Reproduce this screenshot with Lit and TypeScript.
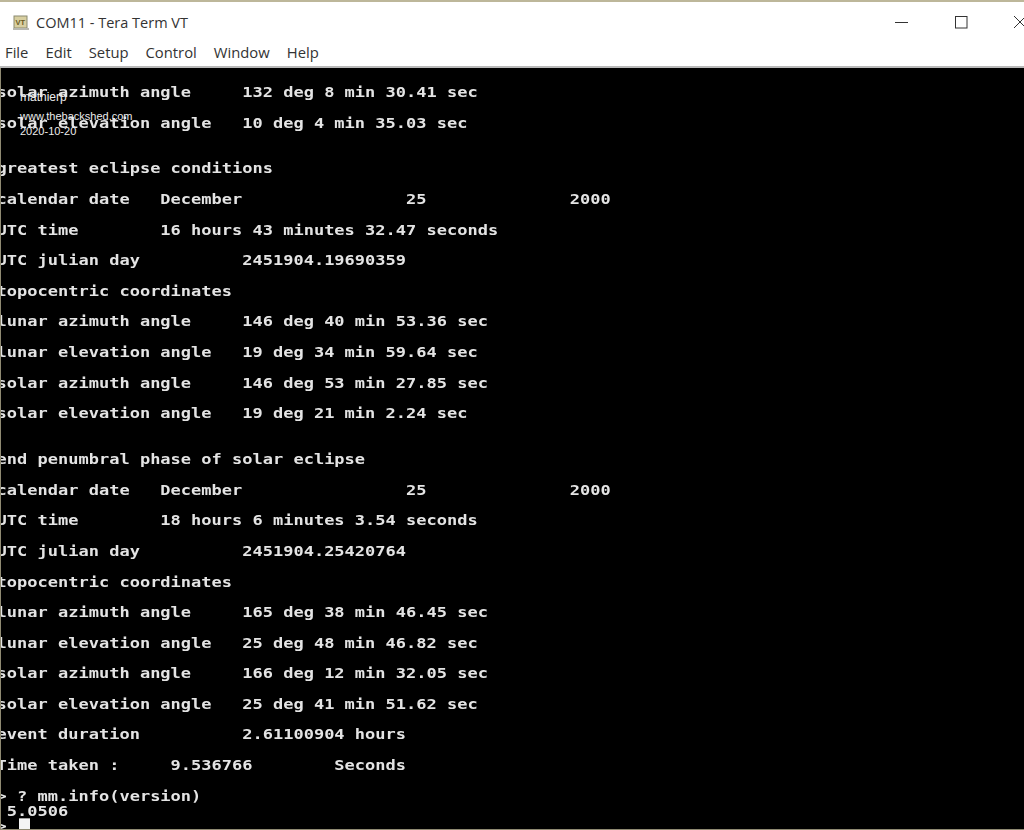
import { LitElement, html, css } from "lit";
import { customElement } from "lit/decorators.js";

const LINES: [number, string][] = [
  [0, "solar azimuth angle     132 deg 8 min 30.41 sec"],
  [2, "solar elevation angle   10 deg 4 min 35.03 sec"],
  [5, "greatest eclipse conditions"],
  [7, "calendar date   December                25              2000"],
  [9, "UTC time        16 hours 43 minutes 32.47 seconds"],
  [11, "UTC julian day          2451904.19690359"],
  [13, "topocentric coordinates"],
  [15, "lunar azimuth angle     146 deg 40 min 53.36 sec"],
  [17, "lunar elevation angle   19 deg 34 min 59.64 sec"],
  [19, "solar azimuth angle     146 deg 53 min 27.85 sec"],
  [21, "solar elevation angle   19 deg 21 min 2.24 sec"],
  [24, "end penumbral phase of solar eclipse"],
  [26, "calendar date   December                25              2000"],
  [28, "UTC time        18 hours 6 minutes 3.54 seconds"],
  [30, "UTC julian day          2451904.25420764"],
  [32, "topocentric coordinates"],
  [34, "lunar azimuth angle     165 deg 38 min 46.45 sec"],
  [36, "lunar elevation angle   25 deg 48 min 46.82 sec"],
  [38, "solar azimuth angle     166 deg 12 min 32.05 sec"],
  [40, "solar elevation angle   25 deg 41 min 51.62 sec"],
  [42, "event duration          2.61100904 hours"],
  [44, "Time taken :     9.536766        Seconds"],
  [46, "> ? mm.info(version)"],
  [47, " 5.0506"],
];

@customElement("app-root")
export class AppRoot extends LitElement {
  static styles = css`
    :host {
      display: block;
      width: 1024px;
      height: 830px;
      overflow: hidden;
      position: relative;
      background: #000;
    }
    .chrome {
      height: 68px;
      box-sizing: border-box;
      background: #fff;
      border-top: 2px solid #bdb79a;
      border-bottom: 2px solid #b9b9b9;
      display: flex;
      flex-direction: column;
      font-family: "Open Sans", "Noto Sans", sans-serif;
      color: #333;
    }
    .title {
      height: 39px;
      padding-top: 2px;
      box-sizing: border-box;
      display: flex;
      align-items: center;
      padding-left: 13px;
      gap: 7px;
      font-size: 14.5px;
    }
    .vt {
      width: 16px;
      height: 16px;
      display: block;
    }
    .controls {
      margin-left: auto;
      display: flex;
      align-items: center;
      gap: 45px;
      margin-right: -3px;
      margin-top: -2px;
    }
    .controls svg {
      display: block;
    }
    .menu {
      display: flex;
      gap: 17px;
      padding-left: 5px;
      font-size: 14.8px;
      line-height: 20px;
      margin-top: 1px;
    }
    .term {
      background: #000;
      height: 762px;
      overflow: hidden;
      display: grid;
      grid-template-rows: repeat(49, 15.3px);
      padding-top: 17px;
      box-sizing: border-box;
      filter: blur(0.35px);
    }
    .line {
      white-space: pre;
      margin-left: -3.4px;
      color: #e4e4e4;
      font: bold 17px/15.3px "DejaVu Sans Mono", monospace;
      transform: scaleY(0.86);
    }
    .prompt {
      display: flex;
    }
    .cursor {
      width: 11px;
      height: 13px;
      margin-left: 12.4px;
      margin-top: -2px;
      background: #f4f4f4;
    }
    .edge-left {
      position: absolute;
      left: 0;
      top: 68px;
      bottom: 0;
      width: 1px;
      background: #8f8a72;
    }
    .edge-bottom {
      position: absolute;
      left: 0;
      right: 0;
      bottom: 0;
      height: 1px;
      background: #8f8a72;
    }
    .mark {
      position: absolute;
      left: 20px;
      top: 91px;
      color: #ececec;
      font: 11px/1 "Liberation Sans", Arial, sans-serif;
    }
    .mark div {
      position: absolute;
      white-space: pre;
    }
    .m1 { top: 0; font-size: 12px; }
    .m2 { top: 20px; }
    .m3 { top: 35px; }
  `;

  render() {
    return html`
      <div class="chrome">
        <div class="title">
          <svg class="vt" viewBox="0 0 16 16">
            <rect x="1" y="1" width="13" height="12" fill="#d8cfa0" stroke="#8a8a70" />
            <rect x="0" y="13" width="16" height="2" fill="#b8b8b0" />
            <text x="2.5" y="10" font-size="7.5" font-weight="700" font-family="Liberation Sans" fill="#6a5a20">VT</text>
          </svg>
          <span>COM11 - Tera Term VT</span>
          <div class="controls">
            <svg width="14" height="14" viewBox="0 0 14 14"><path d="M0 7.5h13" stroke="#333" fill="none" /></svg>
            <svg width="14" height="14" viewBox="0 0 14 14"><rect x="1.5" y="1.5" width="11.5" height="11.5" stroke="#333" fill="none" /></svg>
            <svg width="14" height="14" viewBox="0 0 14 14"><path d="M1 1l12 12M1 13L13 1" stroke="#333" fill="none" /></svg>
          </div>
        </div>
        <div class="menu">
          <span>File</span><span>Edit</span><span>Setup</span><span>Control</span><span>Window</span><span>Help</span>
        </div>
      </div>
      <div class="term">
        ${LINES.map(
          ([r, t]) => html`<div class="line" style="grid-row:${r + 1}">${t}</div>`
        )}
        <div class="line prompt" style="grid-row:49">&gt;<span class="cursor"></span></div>
      </div>
      <div class="edge-left"></div>
      <div class="edge-bottom"></div>
      <div class="mark">
        <div class="m1">mathierp</div>
        <div class="m2">www.thebackshed.com</div>
        <div class="m3">2020-10-20</div>
      </div>
    `;
  }
}
